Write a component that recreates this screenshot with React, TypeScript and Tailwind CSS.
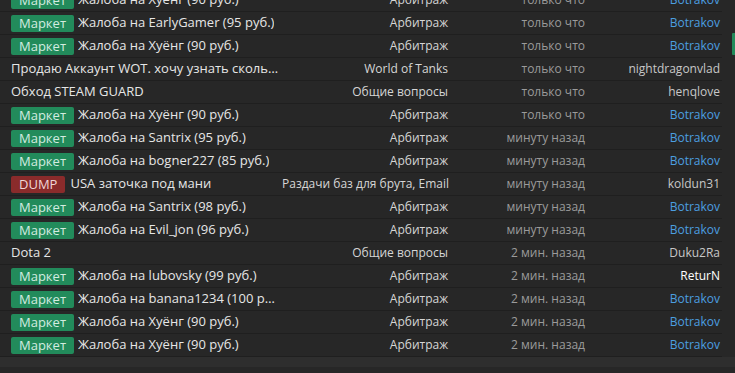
import React from "react";

type Row = {
  badge?: "m" | "d";
  title: string;
  cat: string;
  time: string;
  author: string;
  ac?: "blue" | "white" | "gray";
};

const rows: Row[] = [
  { badge: "m", title: "Жалоба на Хуёнг (90 руб.)", cat: "Арбитраж", time: "только что", author: "Botrakov", ac: "blue" },
  { badge: "m", title: "Жалоба на EarlyGamer (95 руб.)", cat: "Арбитраж", time: "только что", author: "Botrakov", ac: "blue" },
  { badge: "m", title: "Жалоба на Хуёнг (90 руб.)", cat: "Арбитраж", time: "только что", author: "Botrakov", ac: "blue" },
  { title: "Продаю Аккаунт WOT. хочу узнать сколько стоит", cat: "World of Tanks", time: "только что", author: "nightdragonvlad" },
  { title: "Обход STEAM GUARD", cat: "Общие вопросы", time: "только что", author: "henqlove" },
  { badge: "m", title: "Жалоба на Хуёнг (90 руб.)", cat: "Арбитраж", time: "только что", author: "Botrakov", ac: "blue" },
  { badge: "m", title: "Жалоба на Santrix (95 руб.)", cat: "Арбитраж", time: "минуту назад", author: "Botrakov", ac: "blue" },
  { badge: "m", title: "Жалоба на bogner227 (85 руб.)", cat: "Арбитраж", time: "минуту назад", author: "Botrakov", ac: "blue" },
  { badge: "d", title: "USA заточка под мани", cat: "Раздачи баз для брута, Email", time: "минуту назад", author: "koldun31" },
  { badge: "m", title: "Жалоба на Santrix (98 руб.)", cat: "Арбитраж", time: "минуту назад", author: "Botrakov", ac: "blue" },
  { badge: "m", title: "Жалоба на Evil_jon (96 руб.)", cat: "Арбитраж", time: "минуту назад", author: "Botrakov", ac: "blue" },
  { title: "Dota 2", cat: "Общие вопросы", time: "2 мин. назад", author: "Duku2Ra" },
  { badge: "m", title: "Жалоба на lubovsky (99 руб.)", cat: "Арбитраж", time: "2 мин. назад", author: "ReturN", ac: "white" },
  { badge: "m", title: "Жалоба на banana1234 (100 руб.)", cat: "Арбитраж", time: "2 мин. назад", author: "Botrakov", ac: "blue" },
  { badge: "m", title: "Жалоба на Хуёнг (90 руб.)", cat: "Арбитраж", time: "2 мин. назад", author: "Botrakov", ac: "blue" },
  { badge: "m", title: "Жалоба на Хуёнг (90 руб.)", cat: "Арбитраж", time: "2 мин. назад", author: "Botrakov", ac: "blue" },
];

function Badge({ kind }: { kind: "m" | "d" }) {
  if (kind === "m")
    return (
      <span className="shrink-0 h-[17px] px-[8px] mr-[4px] rounded-[2px] bg-[#228b5b] text-[#d3ece0] flex items-center leading-none">
        Маркет
      </span>
    );
  return (
    <span className="shrink-0 h-[17px] px-[8px] mr-[5px] rounded-[2px] bg-[#8a2b2b] text-[#f0d6d6] flex items-center leading-none">
      DUMP
    </span>
  );
}

export default function App() {
  return (
    <div
      className="relative w-[735px] h-[373px] overflow-hidden bg-[#272727] text-[13px]"
      style={{ fontFamily: '"Open Sans", "Noto Sans", sans-serif' }}
    >
      <div className="w-[722px] mt-[-11px]">
        {rows.map((r, i) => (
          <div key={i} className="flex items-center h-[23px] border-b border-[#1f1f1f]">
            <div className="w-[282px] pl-[11px] pr-[2px] flex items-center min-w-0 text-[#e6e6e6]">
              {r.badge && <Badge kind={r.badge} />}
              <span className="truncate">{r.title}</span>
            </div>
            <div className="w-[166px] text-right text-[12px] text-[#d6d6d6] whitespace-nowrap">{r.cat}</div>
            <div className="w-[137px] text-right text-[12px] text-[#9b9b9b] whitespace-nowrap">{r.time}</div>
            <div
              className={
                "w-[135px] text-right text-[12px] whitespace-nowrap " +
                (r.ac === "blue"
                  ? "text-[#4c9fe0]"
                  : r.ac === "white"
                  ? "text-[#ffffff] font-medium"
                  : "text-[#c8c8c8]")
              }
            >
              {r.author}
            </div>
          </div>
        ))}
      </div>
      <div className="h-[10px] bg-[#2e2e2e]" />
      <div className="absolute right-0 top-[33px] w-[3px] h-[22px] bg-[#228b5b] rounded-l-[1px]" />
    </div>
  );
}
